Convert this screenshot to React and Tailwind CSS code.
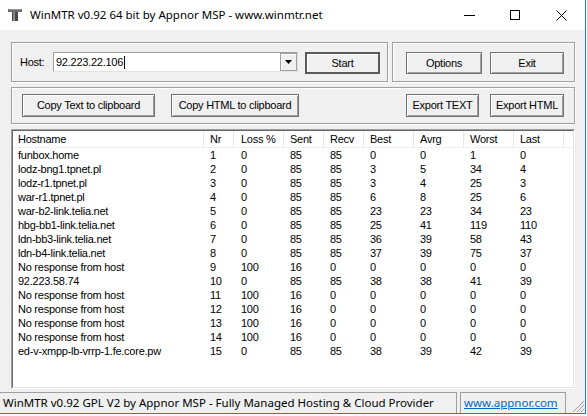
import React from "react";

const rows = [
  ["funbox.home", 1, 0, 85, 85, 0, 0, 1, 0],
  ["lodz-bng1.tpnet.pl", 2, 0, 85, 85, 3, 5, 34, 4],
  ["lodz-r1.tpnet.pl", 3, 0, 85, 85, 3, 4, 25, 3],
  ["war-r1.tpnet.pl", 4, 0, 85, 85, 6, 8, 25, 6],
  ["war-b2-link.telia.net", 5, 0, 85, 85, 23, 23, 34, 23],
  ["hbg-bb1-link.telia.net", 6, 0, 85, 85, 25, 41, 119, 110],
  ["ldn-bb3-link.telia.net", 7, 0, 85, 85, 36, 39, 58, 43],
  ["ldn-b4-link.telia.net", 8, 0, 85, 85, 37, 39, 75, 37],
  ["No response from host", 9, 100, 16, 0, 0, 0, 0, 0],
  ["92.223.58.74", 10, 0, 85, 85, 38, 38, 41, 39],
  ["No response from host", 11, 100, 16, 0, 0, 0, 0, 0],
  ["No response from host", 12, 100, 16, 0, 0, 0, 0, 0],
  ["No response from host", 13, 100, 16, 0, 0, 0, 0, 0],
  ["No response from host", 14, 100, 16, 0, 0, 0, 0, 0],
  ["ed-v-xmpp-lb-vrrp-1.fe.core.pw", 15, 0, 85, 85, 38, 39, 42, 39],
];

const headers = ["Hostname", "Nr", "Loss %", "Sent", "Recv", "Best", "Avrg", "Worst", "Last"];
const widths = ["w-[191px] pl-[5px]", "w-[30px] pl-[6px]", "w-[50px] pl-[7px]", "w-[40px] pl-[6px]", "w-[40px] pl-[6px]", "w-[50px] pl-[6px]", "w-[50px] pl-[6px]", "w-[50px] pl-[6px]", "w-[50px] pl-[6px]"];

function Btn({ className, children }) {
  return (
    <div
      className={
        "flex items-center justify-center bg-[#f0f0f0] border border-[#707070] shadow-[inset_1px_1px_0_#ffffff,inset_-1px_-1px_0_#a0a0a0] " +
        className
      }
    >
      {children}
    </div>
  );
}

function Group({ className, children }) {
  return (
    <div
      className={
        "border border-[#a0a0a0] shadow-[inset_1px_1px_0_#ffffff,1px_1px_0_#ffffff] " + className
      }
    >
      {children}
    </div>
  );
}

export default function App() {
  const ui = { fontFamily: '"Liberation Sans", Arial, sans-serif' };
  const seg = { fontFamily: '"Noto Sans", "Open Sans", sans-serif' };
  return (
    <div className="w-[587px] h-[416px] bg-white overflow-hidden">
      <div className="w-[586px] h-[414px] border-r border-b border-[#2b79d0] flex flex-col">
        {/* Title bar */}
        <div className="h-[30px] bg-white flex items-center shrink-0" style={seg}>
          <svg className="ml-[8px]" width="14" height="12" viewBox="0 0 14 12">
            <rect x="0" y="0" width="14" height="3" fill="#6b6b6b" />
            <rect x="1" y="0" width="12" height="1" fill="#9a9a9a" />
            <rect x="4" y="3" width="6" height="9" fill="#4a4a4a" />
            <rect x="5" y="3" width="2" height="9" fill="#8a8a8a" />
          </svg>
          <span className="ml-[8px] text-[11.5px] text-black">WinMTR v0.92 64 bit by Appnor MSP - www.winmtr.net</span>
          <div className="flex-1" />
          <svg width="12" height="12" viewBox="0 0 12 12" className="mr-[34px]">
            <line x1="0" y1="6.5" x2="11" y2="6.5" stroke="#000" strokeWidth="1" />
          </svg>
          <svg width="10" height="10" viewBox="0 0 10 10" className="mr-[36px]">
            <rect x="0.5" y="0.5" width="9" height="9" fill="none" stroke="#000" strokeWidth="1" />
          </svg>
          <svg width="11" height="11" viewBox="0 0 11 11" className="mr-[18px]">
            <line x1="0.5" y1="0.5" x2="10.5" y2="10.5" stroke="#000" strokeWidth="1" />
            <line x1="10.5" y1="0.5" x2="0.5" y2="10.5" stroke="#000" strokeWidth="1" />
          </svg>
        </div>

        {/* Client */}
        <div className="flex-1 bg-[#f0f0f0] flex flex-col text-[11px] tracking-[-0.25px] text-black" style={ui}>
          <div className="flex ml-[11px] mt-[12px] h-[40px] shrink-0">
            <Group className="w-[377px] h-[40px] flex items-start pt-[9px] pl-[8px]">
              <div className="w-[33px] h-[20px] flex items-center">Host:</div>
              <div className="w-[245px] h-[20px] bg-white border border-[#a0a0a0] border-r-[#e3e3e3] border-b-[#e3e3e3] flex items-center relative">
                <span className="pl-[2px]">92.223.22.106</span>
                <span className="w-px h-[13px] bg-black ml-[1px]" />
                <div className="flex-1" />
                <div className="w-[17px] h-[18px] bg-[#f0f0f0] border border-[#a0a0a0] shadow-[inset_1px_1px_0_#ffffff] flex items-center justify-center">
                  <svg width="7" height="4" viewBox="0 0 7 4">
                    <polygon points="0,0 7,0 3.5,4" fill="#000" />
                  </svg>
                </div>
              </div>
              <div className="ml-[7px] w-[75px] h-[22px] border-2 border-[#5a5a5a] bg-[#f0f0f0] flex items-center justify-center shadow-[inset_1px_1px_0_#ffffff]">
                Start
              </div>
            </Group>
            <Group className="ml-[4px] w-[183px] h-[40px] flex items-start pt-[9px] pl-[13px]">
              <Btn className="w-[76px] h-[22px]">Options</Btn>
              <Btn className="ml-[8px] w-[74px] h-[22px]">Exit</Btn>
            </Group>
          </div>

          <Group className="ml-[11px] mt-[5px] w-[564px] h-[37px] shrink-0 flex items-start pt-[6px] pl-[10px] pr-[10px]">
            <Btn className="w-[133px] h-[23px]">Copy Text to clipboard</Btn>
            <Btn className="ml-[16px] w-[128px] h-[23px]">Copy HTML to clipboard</Btn>
            <div className="flex-1" />
            <Btn className="w-[73px] h-[23px]">Export TEXT</Btn>
            <Btn className="ml-[11px] w-[74px] h-[23px]">Export HTML</Btn>
          </Group>

          {/* List view */}
          <div className="ml-[11px] mt-[5px] w-[564px] h-[260px] shrink-0 border border-[#a0a0a0] border-r-white border-b-white">
            <div className="w-full h-full border border-[#696969] border-r-[#e3e3e3] border-b-[#e3e3e3] bg-white flex flex-col overflow-hidden">
              <div className="h-[17px] flex shrink-0 border-b border-[#f0f0f0]">
                {headers.map((h, i) => (
                  <div key={h} className={"h-full flex items-center border-r border-[#e5e5e5] " + widths[i]}>
                    {h}
                  </div>
                ))}
                <div className="flex-1" />
              </div>
              {rows.map((r, ri) => (
                <div key={ri} className="h-[14px] flex shrink-0">
                  {r.map((c, i) => (
                    <div key={i} className={"h-full flex items-center whitespace-nowrap " + widths[i]}>
                      {c}
                    </div>
                  ))}
                </div>
              ))}
            </div>
          </div>

          <div className="flex-1" />

          {/* Status bar */}
          <div className="h-[21px] shrink-0 flex items-stretch text-[11.5px] tracking-normal" style={seg}>
            <div className="w-[457px] border-t border-r border-[#a0a0a0] flex items-center pl-[3px] whitespace-nowrap overflow-hidden">
              WinMTR v0.92 GPL V2 by Appnor MSP - Fully Managed Hosting &amp; Cloud Provider
            </div>
            <div className="ml-[3px] w-[106px] border-t border-l border-r border-[#a0a0a0] flex items-center pl-[3px]">
              <span className="text-[#0066cc] underline">www.appnor.com</span>
            </div>
            <div className="flex-1 flex items-end justify-end">
              <svg width="14" height="14" viewBox="0 0 14 14">
                <line x1="13" y1="2" x2="2" y2="13" stroke="#a0a0a0" strokeWidth="1" />
                <line x1="13" y1="6" x2="6" y2="13" stroke="#a0a0a0" strokeWidth="1" />
                <line x1="13" y1="10" x2="10" y2="13" stroke="#a0a0a0" strokeWidth="1" />
              </svg>
            </div>
          </div>
        </div>
      </div>
    </div>
  );
}
